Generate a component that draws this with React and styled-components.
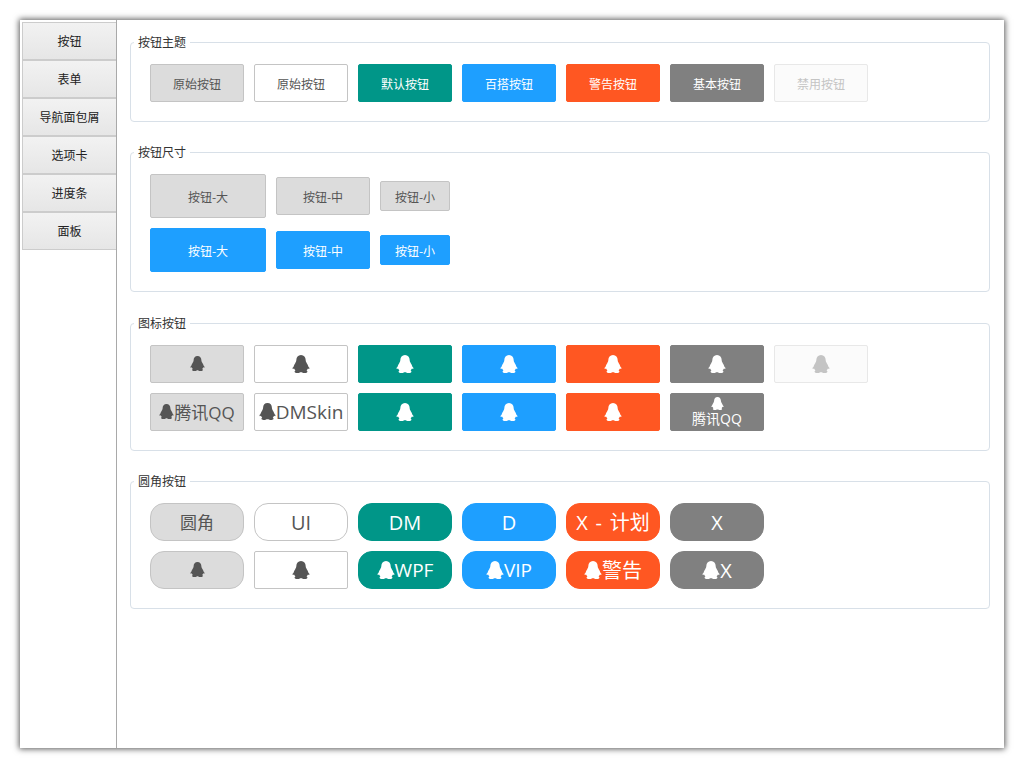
import React from "react";
import styled, { createGlobalStyle, css } from "styled-components";

const GlobalStyle = createGlobalStyle`
  html, body {
    margin: 0;
    padding: 0;
    background: #fff;
  }
  body {
    font-family: "Noto Sans CJK SC", "Noto Sans", sans-serif;
    font-size: 12px;
  }
`;

const menuItems = ["按钮", "表单", "导航面包屑", "选项卡", "进度条", "面板"];

const themeButtons = [
  ["primary", "原始按钮"],
  ["ghost", "原始按钮"],
  ["teal", "默认按钮"],
  ["blue", "百搭按钮"],
  ["orange", "警告按钮"],
  ["gray", "基本按钮"],
  ["disabled", "禁用按钮"],
];

const iconRow = ["primary", "ghost", "teal", "blue", "orange", "gray", "disabled"];

// qq penguin silhouette
const QQ = ({ size = 18 }) => (
  <QQIcon viewBox="0 0 18 19" width={size} height={size * 1.05} fill="currentColor">
    <path d="M9 0C6 0 4.4 2.2 4.3 5C4.3 6.3 3.8 7 3.2 8.2C2.2 9.8 1.8 10.8 1.4 12C.9 12.2.4 13 .5 13.6C.6 14.3 1.2 14.2 2 13.6C2.4 14.4 2.8 15 3.4 15.6C2.6 16 2.2 16.6 2.8 17.4C3.6 18.4 7 18.6 8 17.4C8.6 17.3 9.4 17.3 10 17.4C11 18.6 14.4 18.4 15.2 17.4C15.8 16.6 15.4 16 14.6 15.6C15.2 15 15.6 14.4 16 13.6C16.8 14.2 17.4 14.3 17.5 13.6C17.6 13 17.1 12.2 16.6 12C16.2 10.8 15.8 9.8 14.8 8.2C14.2 7 13.7 6.3 13.7 5C13.6 2.2 12 0 9 0Z" />
  </QQIcon>
);

const App = () => {
  return (
    <Page>
      <GlobalStyle />
      <Window>
        <Sidebar>
          {menuItems.map((item) => (
            <MenuButton key={item}>{item}</MenuButton>
          ))}
        </Sidebar>
        <Main>
          <Section>
            <Legend>按钮主题</Legend>
            <Row>
              {themeButtons.map(([variant, label], i) => (
                <Button key={i} $variant={variant}>
                  {label}
                </Button>
              ))}
            </Row>
          </Section>

          <Section $extra>
            <Legend>按钮尺寸</Legend>
            <Row>
              <Button $variant="primary" $size="lg">按钮-大</Button>
              <Button $variant="primary">按钮-中</Button>
              <Button $variant="primary" $size="sm">按钮-小</Button>
            </Row>
            <Row>
              <Button $variant="blue" $size="lg">按钮-大</Button>
              <Button $variant="blue">按钮-中</Button>
              <Button $variant="blue" $size="sm">按钮-小</Button>
            </Row>
          </Section>

          <Section>
            <Legend>图标按钮</Legend>
            <Row>
              {iconRow.map((variant, i) => (
                <Button key={i} $variant={variant}>
                  <QQ size={i === 0 ? 15 : 18} />
                </Button>
              ))}
            </Row>
            <Row>
              <Button $variant="primary" $text="17px">
                <QQ size={15} />
                <Label>腾讯<Latin>QQ</Latin></Label>
              </Button>
              <Button $variant="ghost" $text="19px">
                <QQ size={17} />
                <Label><Latin>DMSkin</Latin></Label>
              </Button>
              <Button $variant="teal"><QQ /></Button>
              <Button $variant="blue"><QQ /></Button>
              <Button $variant="orange"><QQ /></Button>
              <StackButton $variant="gray" $text="14px">
                <QQ size={13} />
                <span>腾讯<Latin>QQ</Latin></span>
              </StackButton>
            </Row>
          </Section>

          <Section>
            <Legend>圆角按钮</Legend>
            <Row>
              <Button $variant="primary" $round $text="17px"><Label>圆角</Label></Button>
              <Button $variant="ghost" $round $text="20px"><Label><Latin>UI</Latin></Label></Button>
              <Button $variant="teal" $round $text="20px"><Label><Latin>DM</Latin></Label></Button>
              <Button $variant="blue" $round $text="20px"><Label><Latin>D</Latin></Label></Button>
              <Button $variant="orange" $round $text="20px"><Label><Latin>X - </Latin>计划</Label></Button>
              <Button $variant="gray" $round $text="20px"><Label><Latin>X</Latin></Label></Button>
            </Row>
            <Row>
              <Button $variant="primary" $round><QQ size={15} /></Button>
              <Button $variant="ghost"><QQ /></Button>
              <Button $variant="teal" $round $text="19px"><QQ /><Label><Latin>WPF</Latin></Label></Button>
              <Button $variant="blue" $round $text="19px"><QQ /><Label><Latin>VIP</Latin></Label></Button>
              <Button $variant="orange" $round $text="20px"><QQ /><Label>警告</Label></Button>
              <Button $variant="gray" $round $text="20px"><QQ /><Label><Latin>X</Latin></Label></Button>
            </Row>
          </Section>
        </Main>
      </Window>
    </Page>
  );
};

export default App;

// Styled components
const Page = styled.div`
  width: 1024px;
  height: 768px;
  padding: 20px;
  box-sizing: border-box;
  overflow: hidden;
`;

const Window = styled.div`
  display: flex;
  width: 984px;
  height: 728px;
  background: #fff;
  box-shadow: 0 0 6px 1px rgba(0, 0, 0, 0.65);
`;

const Sidebar = styled.nav`
  display: flex;
  flex-direction: column;
  width: 97px;
  box-sizing: border-box;
  padding: 2px 0 0 2px;
  border-right: 1px solid #a9a9a9;
  flex-shrink: 0;
`;

const MenuButton = styled.div`
  display: flex;
  align-items: center;
  justify-content: center;
  height: 38px;
  padding-bottom: 1px;
  box-sizing: border-box;
  border: 1px solid #cccccc;
  border-right: none;
  background: linear-gradient(#f2f2f2, #e6e6e6);
  color: #222;
  font-size: 12px;
`;

const Main = styled.main`
  flex: 1;
  display: flex;
  flex-direction: column;
  padding: 12px 14px 0 13px;
`;

const Section = styled.fieldset`
  margin: 0 0 ${(p) => (p.$extra ? "21px" : "20px")};
  padding: 12px 19px 19px;
  border: 1px solid #d8e0e8;
  border-radius: 4px;
  display: flex;
  flex-direction: column;
  gap: 10px;
  min-width: 0;
`;

const Legend = styled.legend`
  margin-left: -16px;
  padding: 0 4px;
  height: 20px;
  line-height: 20px;
  font-size: 12px;
  color: #333;
`;

const Row = styled.div`
  display: flex;
  align-items: center;
  gap: 10px;
`;

const variants = {
  primary: css`
    background: #dcdcdc;
    border-color: #c4c4c4;
    color: #555;
  `,
  ghost: css`
    background: #fff;
    border-color: #c4c4c4;
    color: #555;
  `,
  teal: css`
    background: #009688;
    border-color: #009688;
    color: #fff;
  `,
  blue: css`
    background: #1e9fff;
    border-color: #1e9fff;
    color: #fff;
  `,
  orange: css`
    background: #ff5722;
    border-color: #ff5722;
    color: #fff;
  `,
  gray: css`
    background: #808080;
    border-color: #808080;
    color: #fff;
  `,
  disabled: css`
    background: #fbfbfb;
    border-color: #e8e8e8;
    color: #c4c4c4;
  `,
};

const sizes = {
  lg: css`
    width: 116px;
    height: 44px;
  `,
  md: css`
    width: 94px;
    height: 38px;
  `,
  sm: css`
    width: 70px;
    height: 30px;
  `,
};

const Button = styled.div`
  display: flex;
  align-items: center;
  justify-content: center;
  box-sizing: border-box;
  flex-shrink: 0;
  border: 1px solid;
  border-radius: ${(p) => (p.$round ? "14px" : "2px")};
  font-size: ${(p) => p.$text || "12px"};
  white-space: nowrap;
  ${(p) => variants[p.$variant]}
  ${(p) => sizes[p.$size || "md"]}
`;

const StackButton = styled(Button)`
  flex-direction: column;
  line-height: 16px;
  overflow: hidden;
`;

// large labels sit a little above the centre of the button
const Label = styled.span`
  padding-bottom: 2px;
`;

const Latin = styled.span`
  font-family: "Open Sans", sans-serif;
  white-space: pre;
  word-spacing: 2.5px;
`;

const QQIcon = styled.svg`
  flex-shrink: 0;
`;
